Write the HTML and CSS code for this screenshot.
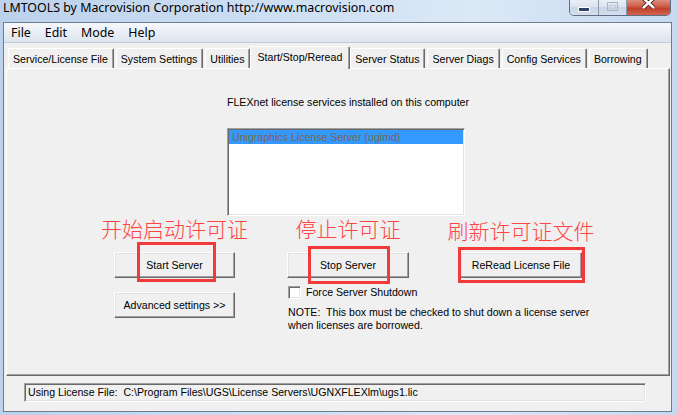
FILE: index.html
```html
<!DOCTYPE html>
<html>
<head>
<meta charset="utf-8">
<title>LMTOOLS</title>
<link rel="stylesheet" href="styles.css">
</head>
<body>
<div class="window">
  <div class="titlebar">
    <span class="title">LMTOOLS by Macrovision Corporation http://www.macrovision.com</span>
    <div class="caption-btns">
      <span class="cb min"><svg width="28" height="15" viewBox="0 0 28 15"><rect x="8.5" y="7.5" width="11" height="4" fill="#2f4566" stroke="#fff" stroke-width="1"/></svg></span>
      <span class="cb max"><svg width="27" height="15" viewBox="0 0 27 15"><rect x="8.5" y="2.5" width="10" height="8" fill="none" stroke="#aab6c6" stroke-width="1"/><rect x="10.5" y="5.5" width="6" height="3" fill="none" stroke="#c4ccd8" stroke-width="1"/></svg></span>
      <span class="cb close"><svg width="43" height="15" viewBox="0 0 43 15"><path d="M16 -2 L27 8 M27 -2 L16 8" stroke="#4a2520" stroke-width="4.2" fill="none"/><path d="M16 -2 L27 8 M27 -2 L16 8" stroke="#fff" stroke-width="2.4" fill="none"/></svg></span>
    </div>
  </div>
  <div class="client">
    <div class="menubar">
      <span class="menu">File</span>
      <span class="menu">Edit</span>
      <span class="menu">Mode</span>
      <span class="menu">Help</span>
    </div>
    <div class="tabs">
      <div class="tab">Service/License File</div>
      <div class="tab">System Settings</div>
      <div class="tab">Utilities</div>
      <div class="tab active">Start/Stop/Reread</div>
      <div class="tab">Server Status</div>
      <div class="tab">Server Diags</div>
      <div class="tab">Config Services</div>
      <div class="tab">Borrowing</div>
    </div>
    <div class="panel">
      <div class="services">
        <div class="caption">FLEXnet license services installed on this computer</div>
        <div class="listbox">
          <div class="item selected">Unigraphics License Server (uglmd)</div>
        </div>
      </div>
      <div class="actions">
        <div class="col c1">
          <div class="cn">开始启动许可证</div>
          <div class="btn-wrap">
            <div class="btn">Start Server</div>
            <span class="mark m1"></span>
          </div>
          <div class="btn adv">Advanced settings &gt;&gt;</div>
        </div>
        <div class="col c2">
          <div class="cn">停止许可证</div>
          <div class="btn-wrap">
            <div class="btn">Stop Server</div>
            <span class="mark m2"></span>
          </div>
          <div class="check-row">
            <span class="checkbox"></span>
            <span class="check-label">Force Server Shutdown</span>
          </div>
          <div class="note">NOTE:&nbsp; This box must be checked to shut down a license server<br>when licenses are borrowed.</div>
        </div>
        <div class="col c3">
          <div class="cn low">刷新许可证文件</div>
          <div class="btn-wrap">
            <div class="btn">ReRead License File</div>
            <span class="mark m3"></span>
          </div>
        </div>
      </div>
    </div>
    <div class="status">Using License File:&nbsp; C:\Program Files\UGS\License Servers\UGNXFLEXlm\ugs1.lic</div>
  </div>
</div>
</body>
</html>
```
FILE: styles.css
```css
html, body {
  margin: 0;
  padding: 0;
}
body {
  width: 677px;
  height: 415px;
  overflow: hidden;
  background: #c8daf0;
}
.window {
  width: 677px;
  height: 415px;
  box-sizing: border-box;
  background: linear-gradient(to right, #bcd2ec 0%, #cfe0f3 45%, #dbe8f6 70%, #c6d9ef 100%);
  display: flex;
  flex-direction: column;
}
.titlebar {
  height: 22px;
  display: flex;
  align-items: flex-start;
  flex: none;
}
.title {
  font-family: "Noto Sans", sans-serif;
  font-size: 12.4px;
  line-height: 16px;
  color: #000;
  padding-left: 3px;
  white-space: nowrap;
}
.caption-btns {
  margin-left: auto;
  margin-right: 6px;
  display: flex;
  height: 15px;
  border: 1px solid #5d6f88;
  border-top: none;
  border-radius: 0 0 5px 5px;
  overflow: hidden;
}
.cb {
  display: block;
  height: 15px;
}
.cb svg {
  display: block;
}
.min, .max {
  background: linear-gradient(#e9eff7 0%, #dbe4f0 45%, #c9d5e5 50%, #d5dfec 100%);
  border-right: 1px solid #8797ad;
}
.close {
  background: linear-gradient(#dd8f80 0%, #cc5a45 45%, #c0402b 55%, #d1644b 100%);
}
.client {
  flex: none;
  margin: 0 5px 0 3px;
  height: 390px;
  box-sizing: border-box;
  border: 1px solid #6b7c93;
  background: #f0f0f0;
  display: flex;
  flex-direction: column;
}
.menubar {
  height: 19px;
  flex: none;
  border-bottom: 1px solid #c3ccd9;
  background: linear-gradient(#f6f8fb 0%, #e9eef5 50%, #dde5ef 100%);
  display: flex;
}
.menu {
  font-family: "Noto Sans", sans-serif;
  font-size: 12.4px;
  line-height: 19px;
  padding: 0 7px;
  color: #000;
}
.tabs {
  height: 25px;
  flex: none;
  display: flex;
  align-items: flex-end;
  padding-left: 4px;
}
.tab {
  position: relative;
  height: 20px;
  box-sizing: border-box;
  padding: 2px 5px 0 4px;
  border-top: 1px solid #fff;
  border-left: 1px solid #fff;
  border-right: 1px solid #696969;
  box-shadow: inset -1px 0 #a0a0a0;
  border-radius: 2px 2px 0 0;
  margin-right: 2px;
  font-family: "Liberation Sans", Arial, sans-serif;
  font-size: 10.6px;
  line-height: 17px;
  color: #000;
  white-space: nowrap;
  background: #f0f0f0;
}
.tab.active {
  height: 23px;
  margin: 0 0 -1px -2px;
  padding: 2px 7px 0 6px;
  z-index: 1;
}
.panel {
  flex: none;
  height: 308px;
  box-sizing: border-box;
  margin: 0 1px 0 2px;
  border: 1px solid;
  border-color: #fff #696969 #696969 #fff;
  box-shadow: inset -1px -1px #a0a0a0;
  font-family: "Liberation Sans", Arial, sans-serif;
  font-size: 10.6px;
  line-height: 13px;
  color: #000;
}
.services {
  margin-top: 27px;
  padding-left: 220px;
}
.caption {
  white-space: nowrap;
}
.listbox {
  margin-top: 19px;
  width: 238px;
  height: 88px;
  box-sizing: border-box;
  border: 1px solid;
  border-color: #a0a0a0 #fff #fff #a0a0a0;
  box-shadow: inset 1px 1px #696969, inset -1px -1px #e3e3e3;
  background: #fff;
  padding: 1px;
}
.item {
  height: 14px;
  line-height: 14px;
  padding-left: 3px;
  white-space: nowrap;
}
.item.selected {
  background: #3399ff;
  color: #7c6652;
}
.actions {
  display: flex;
  padding-left: 107px;
  margin-top: 1px;
}
.col {
  display: flex;
  flex-direction: column;
}
.c1 {
  width: 121px;
}
.c2 {
  width: 122px;
  margin-left: 52px;
}
.c3 {
  width: 122px;
  margin-left: 51px;
}
.cn {
  display: flex;
  justify-content: center;
  white-space: nowrap;
  height: 22px;
  font-family: "Noto Sans CJK SC", "Noto Sans", sans-serif;
  font-size: 21px;
  font-weight: 300;
  line-height: 22px;
  color: #ff4444;
}
.cn.low {
  padding-top: 2px;
  height: 20px;
}
.btn-wrap {
  position: relative;
  margin-top: 13px;
}
.btn {
  height: 26px;
  box-sizing: border-box;
  border: 1px solid;
  border-color: #fff #696969 #696969 #fff;
  box-shadow: inset -1px -1px #a0a0a0, inset 1px 1px #e3e3e3;
  background: #f0f0f0;
  display: flex;
  align-items: center;
  justify-content: center;
  white-space: nowrap;
}
.btn.adv {
  margin-top: 14px;
}
.mark {
  position: absolute;
  box-sizing: border-box;
  border: 3px solid #f23a3a;
}
.m1 {
  left: 23px;
  top: -10px;
  width: 79px;
  height: 40px;
}
.m2 {
  left: 21px;
  top: -6px;
  width: 82px;
  height: 38px;
}
.m3 {
  left: -2px;
  top: -5px;
  width: 127px;
  height: 36px;
}
.check-row {
  margin-top: 8px;
  height: 13px;
  display: flex;
  align-items: center;
  padding-left: 1px;
  white-space: nowrap;
}
.checkbox {
  width: 13px;
  height: 13px;
  box-sizing: border-box;
  border: 1px solid;
  border-color: #a0a0a0 #fff #fff #a0a0a0;
  box-shadow: inset 1px 1px #696969, inset -1px -1px #e3e3e3;
  background: #fff;
  flex: none;
}
.check-label {
  margin-left: 5px;
}
.note {
  margin-top: 7px;
  padding-left: 1px;
  white-space: nowrap;
}
.status {
  flex: none;
  margin: 7px 0 0 20px;
  width: 622px;
  height: 19px;
  box-sizing: border-box;
  border: 1px solid;
  border-color: #a0a0a0 #fff #fff #a0a0a0;
  box-shadow: inset 1px 1px #696969, inset -1px -1px #e3e3e3;
  padding: 2px 0 0 3px;
  font-family: "Liberation Sans", Arial, sans-serif;
  font-size: 10.6px;
  line-height: 13px;
  white-space: nowrap;
  color: #000;
}
```
